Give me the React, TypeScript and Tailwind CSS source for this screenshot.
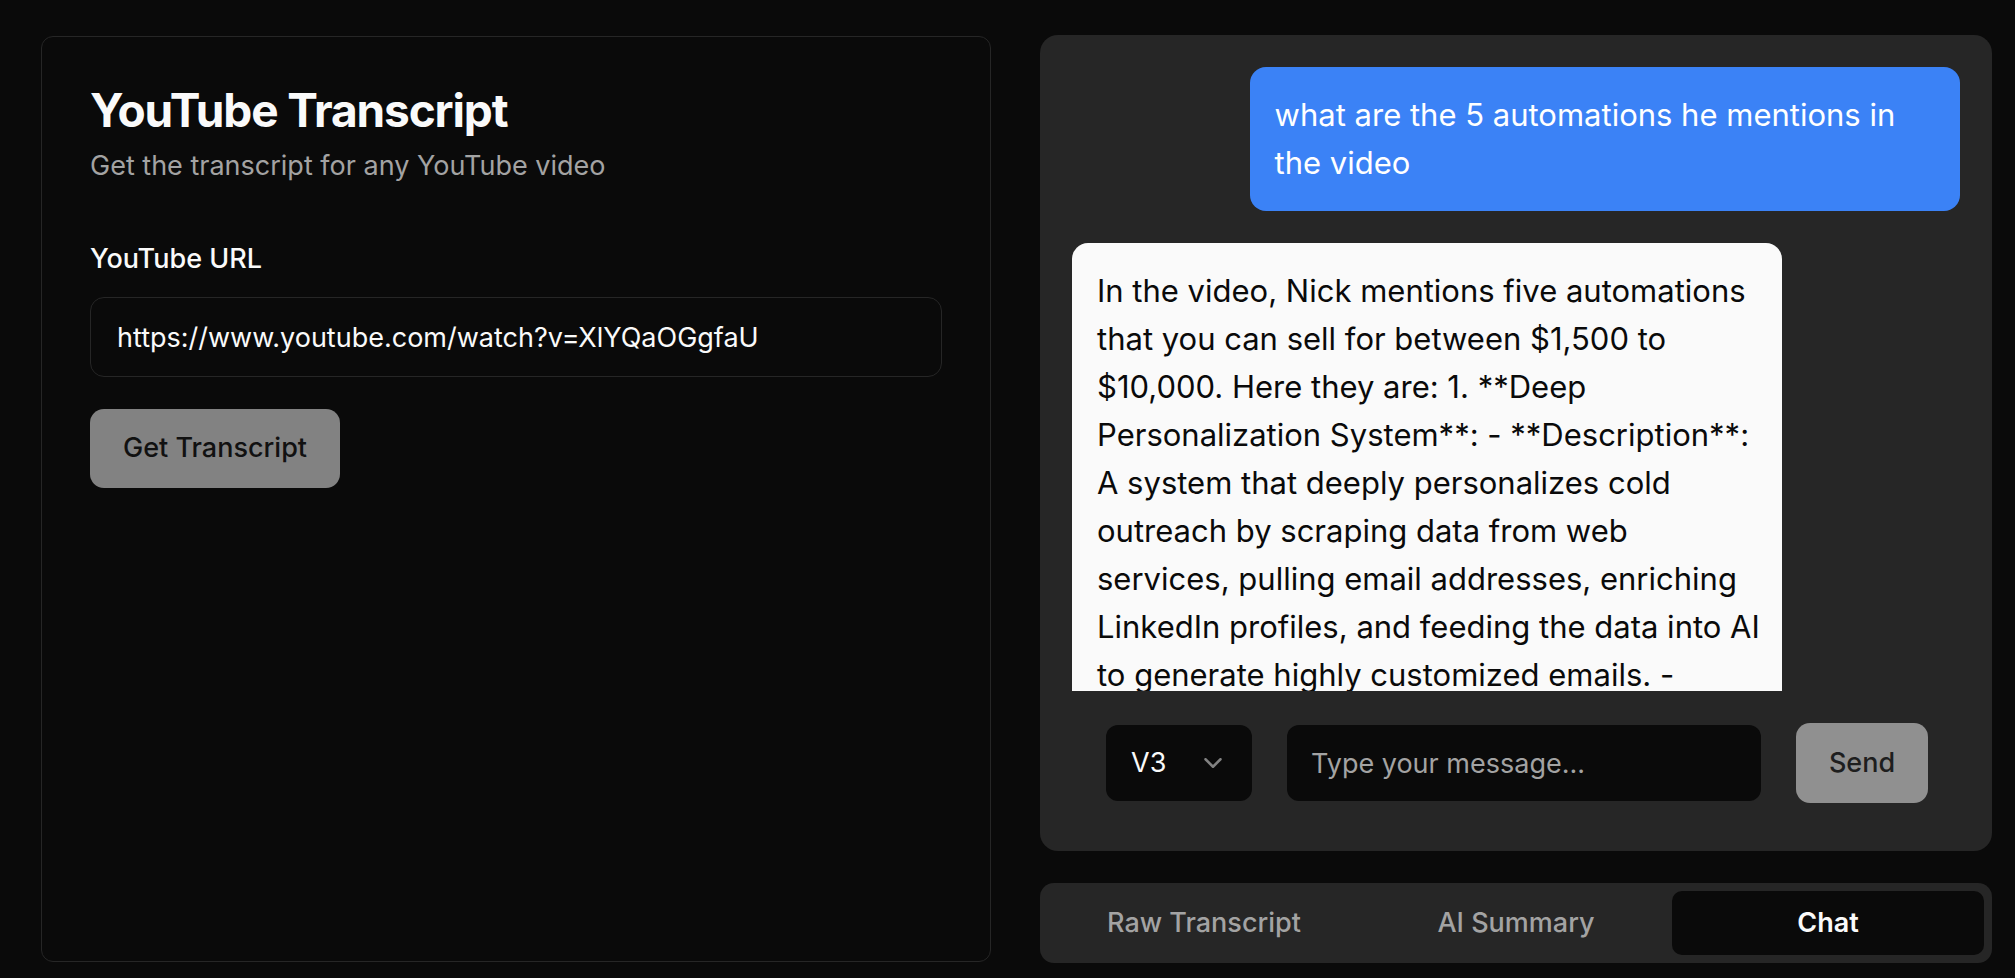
import React from "react";
import { ChevronDown } from "lucide-react";

const assistantLines = [
  "In the video, Nick mentions five automations",
  "that you can sell for between $1,500 to",
  "$10,000. Here they are: 1. **Deep",
  "Personalization System**: - **Description**:",
  "A system that deeply personalizes cold",
  "outreach by scraping data from web",
  "services, pulling email addresses, enriching",
  "LinkedIn profiles, and feeding the data into AI",
  "to generate highly customized emails. -",
];

export default function App() {
  return (
    <div className="min-h-screen w-full bg-[#0a0a0a] font-['Inter',sans-serif] flex items-start gap-[49px] pl-[41px] pt-[35px]">
      {/* Left card */}
      <div className="mt-[1px] w-[950px] h-[926px] shrink-0 rounded-[12px] border border-[#262626] bg-[#0a0a0a] px-[48px] pt-[50px]">
        <h1 className="text-[46px] leading-none font-bold tracking-tight text-[#fafafa]">
          YouTube Transcript
        </h1>
        <p className="mt-[13px] text-[27px] leading-[39px] text-[#a3a3a3]">
          Get the transcript for any YouTube video
        </p>
        <label className="block mt-[60px] text-[27px] leading-none font-medium text-[#fafafa]">
          YouTube URL
        </label>
        <input
          readOnly
          defaultValue="https://www.youtube.com/watch?v=XlYQaOGgfaU"
          className="mt-[25px] block w-full h-[80px] rounded-[14px] border border-[#262626] bg-[#0a0a0a] px-[26px] text-[27px] text-[#fafafa] outline-none"
        />
        <button className="mt-[32px] h-[79px] px-[33px] rounded-[14px] bg-[#828282] text-[#111111] text-[27px] font-medium">
          Get Transcript
        </button>
      </div>

      {/* Right column */}
      <div className="w-[952px] shrink-0 flex flex-col">
        <div className="h-[816px] rounded-[18px] bg-[#262626] p-[32px] flex flex-col">
          <div className="h-[624px] overflow-hidden flex flex-col gap-[32px]">
            <div className="self-end w-[80%] shrink-0 rounded-[16px] bg-[#3b82f6] px-[25px] py-[24px] text-[31px] leading-[48px] text-white">
              <span className="block whitespace-nowrap">what are the 5 automations he mentions in</span>
              <span className="block whitespace-nowrap">the video</span>
            </div>
            <div className="self-start w-[80%] shrink-0 rounded-[16px] bg-[#fafafa] px-[25px] py-[24px] text-[31px] leading-[48px] text-[#0a0a0a]">
              {assistantLines.map((l, i) => (
                <span key={i} className="block whitespace-nowrap">
                  {l}
                </span>
              ))}
            </div>
          </div>
          <div className="mt-[32px] mb-[16px] h-[80px] flex items-center gap-[35px] pl-[34px] pr-[32px]">
            <div className="w-[146px] h-[76px] shrink-0 rounded-[12px] bg-[#0a0a0a] flex items-center justify-between pl-[25px] pr-[24px]">
              <span className="text-[27px] text-[#fafafa]">V3</span>
              <ChevronDown size={30} strokeWidth={2} className="text-[#fafafa] opacity-50" />
            </div>
            <input
              placeholder="Type your message..."
              className="flex-1 min-w-0 h-[76px] rounded-[12px] bg-[#0a0a0a] px-[24px] text-[27px] text-[#fafafa] placeholder:text-[#a3a3a3] outline-none"
            />
            <button className="w-[132px] h-[80px] shrink-0 rounded-[14px] bg-[#909090] text-[#1e1e1e] text-[27px] font-medium">
              Send
            </button>
          </div>
        </div>

        <div className="mt-[32px] h-[80px] rounded-[14px] bg-[#262626] p-[8px] grid grid-cols-3">
          <div className="flex items-center justify-center rounded-[10px] text-[27px] font-medium text-[#a3a3a3]">
            Raw Transcript
          </div>
          <div className="flex items-center justify-center rounded-[10px] text-[27px] font-medium text-[#a3a3a3]">
            AI Summary
          </div>
          <div className="flex items-center justify-center rounded-[10px] bg-[#0a0a0a] text-[27px] font-semibold text-[#fafafa]">
            Chat
          </div>
        </div>
      </div>
    </div>
  );
}
